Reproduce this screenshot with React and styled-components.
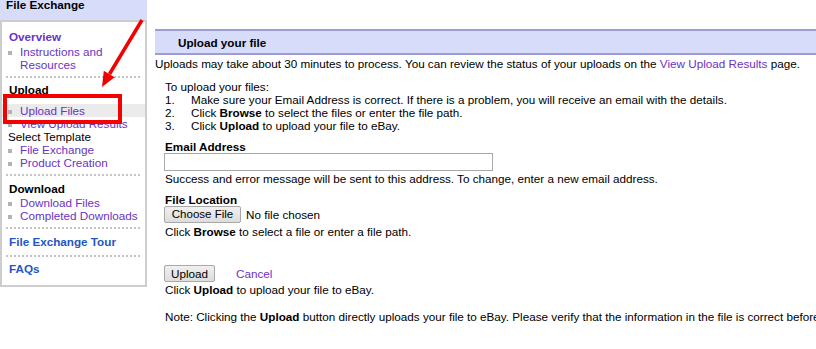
import styled, { createGlobalStyle } from "styled-components";

const GlobalStyle = createGlobalStyle`
  html, body {
    margin: 0;
    padding: 0;
    background: #fff;
    overflow: hidden;
  }
  body {
    font-family: "Liberation Sans", Arial, sans-serif;
    font-size: 11.7px;
    color: #000;
  }
`;

export default function App() {
  return (
    <>
      <GlobalStyle />
      <Page>
        <Sidebar>
          <SideHeader>File Exchange</SideHeader>
          <SideSection $top={8}>
            <SideHeading $color="#6a33c2">Overview</SideHeading>
            <BulletItem $mt={2}>
              <Bullet />
              <SideLink>
                Instructions and
                <br />
                Resources
              </SideLink>
            </BulletItem>
          </SideSection>
          <Dots $mt={5} />
          <SideSection $top={5}>
            <SideHeading>Upload</SideHeading>
            <BulletItem $mt={8} $active>
              <Bullet />
              <SideLink>Upload Files</SideLink>
            </BulletItem>
            <BulletItem>
              <Bullet />
              <SideLink>View Upload Results</SideLink>
            </BulletItem>
            <SidePlain>Select Template</SidePlain>
            <BulletItem>
              <Bullet />
              <SideLink>File Exchange</SideLink>
            </BulletItem>
            <BulletItem>
              <Bullet />
              <SideLink>Product Creation</SideLink>
            </BulletItem>
          </SideSection>
          <Dots $mt={5} />
          <SideSection $top={6}>
            <SideHeading>Download</SideHeading>
            <BulletItem $mt={1}>
              <Bullet />
              <SideLink>Download Files</SideLink>
            </BulletItem>
            <BulletItem>
              <Bullet />
              <SideLink>Completed Downloads</SideLink>
            </BulletItem>
          </SideSection>
          <Dots $mt={5} />
          <SideSection $top={6}>
            <SideHeading $color="#2356c6">File Exchange Tour</SideHeading>
          </SideSection>
          <Dots $mt={7} />
          <SideSection $top={5} $bottom={10}>
            <SideHeading $color="#2356c6">FAQs</SideHeading>
          </SideSection>
        </Sidebar>

        <Main>
          <SectionBar>Upload your file</SectionBar>
          <Intro>
            Uploads may take about 30 minutes to process. You can review the
            status of your uploads on the <Link>View Upload Results</Link> page.
          </Intro>
          <Form>
            <Line $mt={10}>To upload your files:</Line>
            <Steps>
              <li>
                <StepNo>1.</StepNo>
                <StepText>
                  Make sure your Email Address is correct. If there is a
                  problem, you will receive an email with the details.
                </StepText>
              </li>
              <li>
                <StepNo>2.</StepNo>
                <StepText>
                  Click <b>Browse</b> to select the files or enter the file
                  path.
                </StepText>
              </li>
              <li>
                <StepNo>3.</StepNo>
                <StepText>
                  Click <b>Upload</b> to upload your file to eBay.
                </StepText>
              </li>
            </Steps>
            <Label $mt={8}>Email Address</Label>
            <EmailInput type="text" />
            <Line $mt={1}>
              Success and error message will be sent to this address. To
              change, enter a new email address.
            </Line>
            <Label $mt={8}>File Location</Label>
            <FileRow>
              <Button $w={77} $size={11.5}>Choose File</Button>
              <span>No file chosen</span>
            </FileRow>
            <Line $mt={2}>
              Click <b>Browse</b> to select a file or enter a file path.
            </Line>
            <ActionRow>
              <Button $w={51}>Upload</Button>
              <Link>Cancel</Link>
            </ActionRow>
            <Line $mt={1}>
              Click <b>Upload</b> to upload your file to eBay.
            </Line>
            <Line $mt={14}>
              Note: Clicking the <b>Upload</b> button directly uploads your file
              to eBay. Please verify that the information in the file is correct
              before uploading.
            </Line>
          </Form>
        </Main>

        <Callout />
        <Arrow width="160" height="100" viewBox="0 0 160 100">
          <line
            x1="142"
            y1="20"
            x2="109.5"
            y2="74"
            stroke="#f40000"
            strokeWidth="3.5"
          />
          <polygon points="102,87 114.6,77.2 103.8,70.8" fill="#f40000" />
        </Arrow>
      </Page>
    </>
  );
}

const Page = styled.div`
  position: relative;
  display: flex;
  align-items: flex-start;
  width: 816px;
  height: 349px;
  overflow: hidden;
`;

const Sidebar = styled.div`
  flex: 0 0 147px;
  box-sizing: border-box;
  margin-top: -2px;
  border: 2px solid #cdcdcd;
  border-top: none;
  line-height: 13px;
`;

const SideHeader = styled.div`
  background: #d6dcfa;
  font-weight: bold;
  line-height: 14px;
  height: 22px;
  border-bottom: 2px solid #cdcdcd;
  margin: 0 -2px;
  padding-left: 6px;
`;

const SideSection = styled.div`
  padding: ${(p) => p.$top || 0}px 0 ${(p) => p.$bottom || 0}px;
`;

const SideHeading = styled.div`
  font-weight: bold;
  padding-left: 7px;
  color: ${(p) => p.$color || "#000"};
`;

const SidePlain = styled.div`
  padding-left: 6px;
`;

const BulletItem = styled.div`
  display: flex;
  align-items: flex-start;
  margin-top: ${(p) => p.$mt || 0}px;
  background: ${(p) => (p.$active ? "#ebebeb" : "transparent")};
`;

const Bullet = styled.span`
  flex: 0 0 4px;
  height: 4px;
  margin: 6px 8px 0 6px;
  background: #b3b3b3;
`;

const SideLink = styled.span`
  color: #6a33c2;
`;

const Dots = styled.div`
  height: 2px;
  margin: ${(p) => p.$mt}px 4px 0 4px;
  background-image: linear-gradient(to right, #c4c4c4 50%, transparent 50%);
  background-size: 4px 2px;
`;

const Main = styled.div`
  flex: 1;
  min-width: 0;
  margin-left: 8px;
  padding-top: 29px;
  line-height: 13px;
  white-space: nowrap;
`;

const SectionBar = styled.div`
  background: #d6dcfa;
  border-top: 2px solid #9d9dd3;
  border-bottom: 2px solid #9d9dd3;
  padding: 5px 0 3px 23px;
  line-height: 14px;
  font-weight: bold;
  margin-right: -20px;
`;

const Intro = styled.div`
  margin-top: 2px;
`;

const Link = styled.span`
  color: #6a33c2;
`;

const Form = styled.div`
  padding-left: 10px;
`;

const Line = styled.div`
  margin-top: ${(p) => p.$mt || 0}px;
`;

const Label = styled.div`
  margin-top: ${(p) => p.$mt || 0}px;
  font-weight: bold;
`;

const Steps = styled.ol`
  list-style: none;
  margin: 0;
  padding: 0;

  li {
    display: flex;
  }
`;

const StepNo = styled.span`
  flex: 0 0 26px;
`;

const StepText = styled.span``;

const EmailInput = styled.input`
  display: block;
  box-sizing: border-box;
  width: 329px;
  height: 18px;
  margin: 0 0 0 -1px;
  border: 1px solid #a9a9a9;
  padding: 0 2px;
  outline: none;
`;

const FileRow = styled.div`
  display: flex;
  align-items: center;
  gap: 5px;
  margin-left: -1px;
`;

const Button = styled.button`
  box-sizing: border-box;
  width: ${(p) => p.$w}px;
  height: 17px;
  padding: 0;
  border: 1px solid #a8a8a8;
  border-radius: 2px;
  background: linear-gradient(#f0f0f0, #dddddd);
  font-family: "Liberation Sans", Arial, sans-serif;
  font-size: ${(p) => p.$size || 11.7}px;
  line-height: 15px;
  color: #000;
`;

const ActionRow = styled.div`
  display: flex;
  align-items: center;
  gap: 21px;
  margin: 27px 0 0 -1px;
`;

const Callout = styled.div`
  position: absolute;
  left: 3px;
  top: 94px;
  width: 119px;
  height: 30px;
  box-sizing: border-box;
  border: 4px solid #f40000;
`;

const Arrow = styled.svg`
  position: absolute;
  left: 0;
  top: 0;
`;
